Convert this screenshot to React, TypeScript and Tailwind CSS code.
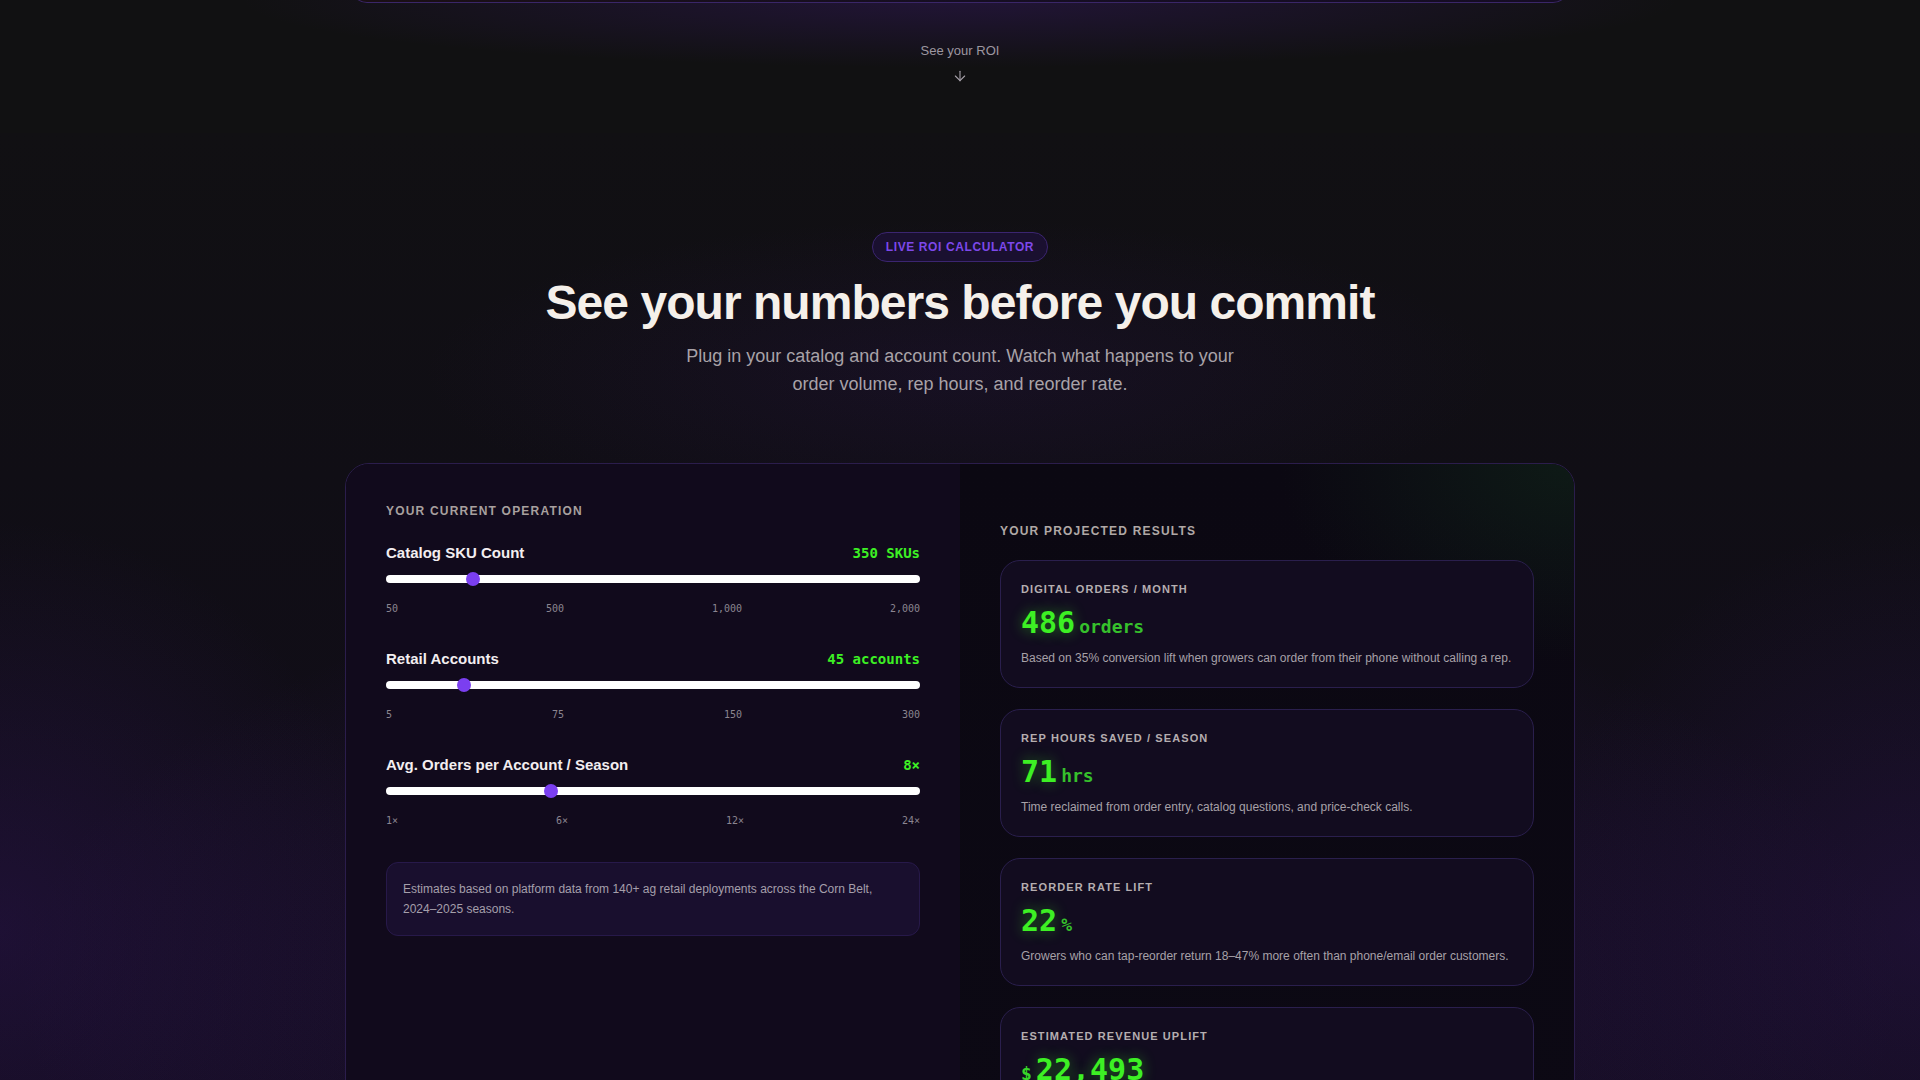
import { ArrowDown } from 'lucide-react';
import { useState } from 'react';

type SliderProps = {
  label: string;
  value: number;
  min: number;
  max: number;
  step?: number;
  display: string;
  ticks: string[];
  onChange: (v: number) => void;
};

const mono = "font-['DejaVu_Sans_Mono','Liberation_Mono',monospace]";

const Slider = ({ label, value, min, max, step = 1, display, ticks, onChange }: SliderProps) => {
  return (
    <div>
      <div className="flex items-center justify-between">
        <span className="text-[15px] leading-5 font-bold text-[#f3eef0]">{label}</span>
        <span className={`${mono} text-[14px] leading-5 font-bold text-[#3df024]`}>{display}</span>
      </div>
      <input
        type="range"
        min={min}
        max={max}
        step={step}
        value={value}
        onChange={(e) => onChange(Number(e.target.value))}
        className="mt-[9px] block h-[14px] w-full cursor-pointer appearance-none bg-transparent
          [&::-webkit-slider-runnable-track]:h-2 [&::-webkit-slider-runnable-track]:rounded-full [&::-webkit-slider-runnable-track]:bg-white
          [&::-webkit-slider-thumb]:-mt-[3px] [&::-webkit-slider-thumb]:h-3.5 [&::-webkit-slider-thumb]:w-3.5 [&::-webkit-slider-thumb]:appearance-none
          [&::-webkit-slider-thumb]:rounded-full [&::-webkit-slider-thumb]:bg-[#7b3ff0]"
      />
      <div className={`${mono} mt-4 flex justify-between text-[10px] leading-[14px] text-[#8b8590]`}>
        {ticks.map((t) => (
          <span key={t}>{t}</span>
        ))}
      </div>
    </div>
  );
};

type ResultProps = {
  label: string;
  value: string;
  unit?: string;
  prefix?: string;
  note?: string;
};

const ResultCard = ({ label, value, unit, prefix, note }: ResultProps) => (
  <div className="rounded-[20px] border border-[#2a1f4d] bg-[#120c1f] p-5">
    <div className="text-[11px] leading-4 font-bold tracking-[0.1em] text-[#b5aeb0] uppercase">{label}</div>
    <div className={`${mono} mt-2 flex items-baseline gap-1 text-[#3df024]`}>
      {prefix && <span className="text-[18px] font-bold text-[#38d62a]">{prefix}</span>}
      <span className="text-[30px] leading-9 font-bold [text-shadow:0_0_14px_rgba(61,240,36,0.45)]">{value}</span>
      {unit && <span className="text-[18px] font-bold text-[#36c02c]">{unit}</span>}
    </div>
    {note && <p className="mt-2 text-[12px] leading-[18px] text-[#a7a1a8]">{note}</p>}
  </div>
);

export default function App() {
  const [skus, setSkus] = useState(350);
  const [accounts, setAccounts] = useState(45);
  const [avgOrders, setAvgOrders] = useState(8);

  // rough model from deployment averages
  const digitalOrders = Math.round(accounts * avgOrders * 1.35);
  const repHours = Math.round(accounts * avgOrders * 0.15 + skus * 0.048);
  const reorderLift = Math.round(18 + (accounts / 300) * 29);
  const revenue = Math.round(digitalOrders * 46.282);

  return (
    <div className="min-h-screen bg-[#0f0d13] font-['Liberation_Sans',Arial,sans-serif] text-white">
      {/* tail end of the previous section */}
      <div className="relative flex h-[133px] flex-col bg-[#111112]">
        <div className="absolute inset-x-0 top-0 h-[90px] bg-[radial-gradient(ellipse_50%_100%_at_50%_0%,rgba(76,29,149,0.28),transparent_75%)]" />
        <div className="relative mx-auto -mt-[30px] h-[33px] w-[1218px] shrink-0 rounded-b-[16px] border-x border-b border-[#3a2668] bg-[linear-gradient(90deg,#1a0f14,#160e22_50%,#150c24)]" />
        <div className="relative flex flex-col items-center pt-[40px]">
          <span className="text-[13px] leading-4 text-[#9d97a0]">See your ROI</span>
          <ArrowDown className="mt-[9px] h-4 w-4 text-[#a9a3ac]" strokeWidth={1.6} />
        </div>
      </div>

      {/* ROI calculator */}
      <section className="relative overflow-hidden bg-[linear-gradient(180deg,#111013_0%,#100e15_30%,#120c1c_100%)] pb-24">
        <div className="pointer-events-none absolute inset-0 bg-[radial-gradient(ellipse_70%_55%_at_50%_75%,rgba(76,29,149,0.35),transparent_70%)]" />
        <div className="pointer-events-none absolute inset-0 bg-[radial-gradient(ellipse_25%_45%_at_0%_70%,rgba(76,29,149,0.22),transparent_80%),radial-gradient(ellipse_25%_45%_at_100%_70%,rgba(76,29,149,0.2),transparent_80%)]" />
        <div className="pointer-events-none absolute inset-x-0 top-[60px] h-[400px] bg-[radial-gradient(ellipse_40%_55%_at_50%_45%,rgba(60,25,110,0.16),transparent_70%)]" />

        <div className="relative flex flex-col items-center pt-[99px]">
          <span className="rounded-full border border-[#3b2570] bg-[#1a1030] px-[13px] py-[6px] text-[12px] leading-4 font-bold tracking-[0.05em] text-[#7d48ea]">
            LIVE ROI CALCULATOR
          </span>
          <h2 className="mt-[14px] text-[48px] leading-[53px] font-bold tracking-[-0.02em] text-[#f5f0ea]">
            See your numbers before you commit
          </h2>
          <p className="mt-[13px] max-w-[560px] text-center text-[18px] leading-7 text-[#a8a2a8]">
            Plug in your catalog and account count. Watch what happens to your order volume, rep hours, and reorder rate.
          </p>

          <div className="mt-[65px] grid w-[1230px] grid-cols-2 overflow-hidden rounded-[24px] border border-[#2b1d4c]">
            {/* inputs */}
            <div className="bg-[#110a1c] px-10 pt-[39px] pb-10">
              <div className="text-[12px] leading-4 font-bold tracking-[0.1em] text-[#a8a09f]">YOUR CURRENT OPERATION</div>
              <div className="mt-6 flex flex-col gap-[33px]">
                <Slider
                  label="Catalog SKU Count"
                  value={skus}
                  min={50}
                  max={2000}
                  step={10}
                  display={`${skus.toLocaleString('en-US')} SKUs`}
                  ticks={['50', '500', '1,000', '2,000']}
                  onChange={setSkus}
                />
                <Slider
                  label="Retail Accounts"
                  value={accounts}
                  min={5}
                  max={300}
                  display={`${accounts} accounts`}
                  ticks={['5', '75', '150', '300']}
                  onChange={setAccounts}
                />
                <Slider
                  label="Avg. Orders per Account / Season"
                  value={avgOrders}
                  min={1}
                  max={24}
                  display={`${avgOrders}×`}
                  ticks={['1×', '6×', '12×', '24×']}
                  onChange={setAvgOrders}
                />
              </div>
              <div className="mt-[34px] rounded-xl border border-[#27194a] bg-[#190f2e] px-4 py-4 text-[12px] leading-5 text-[#a59fab]">
                Estimates based on platform data from 140+ ag retail deployments across the Corn Belt, 2024–2025 seasons.
              </div>
            </div>

            {/* results */}
            <div className="bg-[radial-gradient(ellipse_60%_35%_at_100%_0%,rgba(20,60,30,0.35),transparent_80%),linear-gradient(180deg,#0b0812,#0c0914)] px-10 pt-[59px] pb-10">
              <div className="text-[12px] leading-4 font-bold tracking-[0.1em] text-[#b0a8a6]">YOUR PROJECTED RESULTS</div>
              <div className="mt-[21px] flex flex-col gap-[21px]">
                <ResultCard
                  label="Digital Orders / Month"
                  value={String(digitalOrders)}
                  unit="orders"
                  note="Based on 35% conversion lift when growers can order from their phone without calling a rep."
                />
                <ResultCard
                  label="Rep Hours Saved / Season"
                  value={String(repHours)}
                  unit="hrs"
                  note="Time reclaimed from order entry, catalog questions, and price-check calls."
                />
                <ResultCard
                  label="Reorder Rate Lift"
                  value={String(reorderLift)}
                  unit="%"
                  note="Growers who can tap-reorder return 18–47% more often than phone/email order customers."
                />
                <ResultCard
                  label="Estimated Revenue Uplift"
                  value={revenue.toLocaleString('en-US')}
                  prefix="$"
                  note="Additional seasonal revenue from higher order frequency across your active accounts."
                />
              </div>
            </div>
          </div>
        </div>
      </section>
    </div>
  );
}
